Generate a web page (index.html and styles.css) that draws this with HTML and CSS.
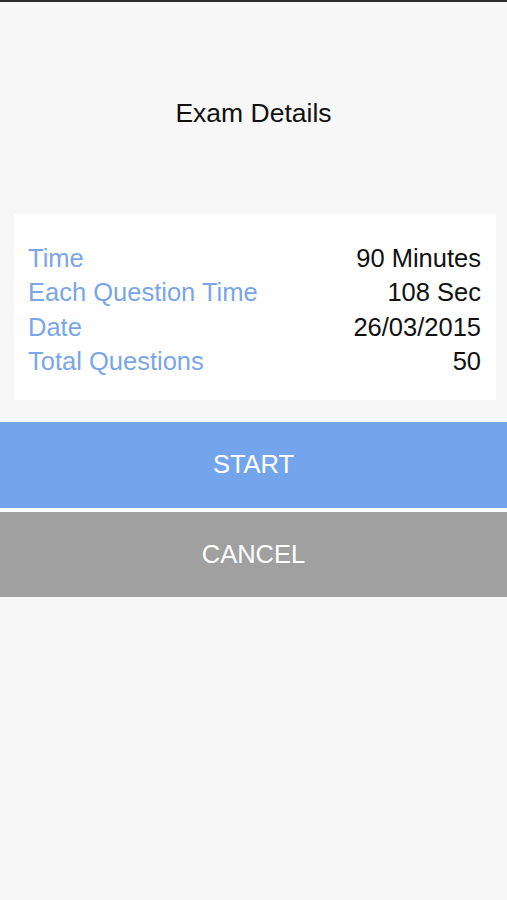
FILE: index.html
```html
<!DOCTYPE html>
<html lang="en">
<head>
  <meta charset="UTF-8" />
  <meta name="viewport" content="width=device-width, initial-scale=1.0" />
  <title>Exam Details</title>
  <link rel="stylesheet" href="styles.css">
</head>
<body>
  <div class="screen">
    <h2 class="title">Exam Details</h2>

    <div class="details">
      <div class="row"><span class="label">Time</span><span class="value">90 Minutes</span></div>
      <div class="row"><span class="label">Each Question Time</span><span class="value">108 Sec</span></div>
      <div class="row"><span class="label">Date</span><span class="value">26/03/2015</span></div>
      <div class="row"><span class="label">Total Questions</span><span class="value">50</span></div>
    </div>

    <div class="actions">
      <button class="btn btn-start">START</button>
      <button class="btn btn-cancel">CANCEL</button>
    </div>
  </div>
</body>
</html>
```

FILE: styles.css
```css
html, body {
  margin: 0;
  padding: 0;
}
body {
  font-family: "Liberation Sans", Arial, sans-serif;
  background-color: #f7f7f7;
  height: 900px;
  border-top: 2px solid #2e2e2e;
  box-sizing: border-box;
}
.title {
  margin: 0;
  padding-top: 96px;
  font-size: 26.5px;
  line-height: 30px;
  font-weight: normal;
  text-align: center;
  color: #111;
}
.details {
  margin: 86px 11px 0 14px;
  background-color: #fff;
  padding: 27px 15px 21px 14px;
}
.row {
  display: flex;
  justify-content: space-between;
  font-size: 25.5px;
  line-height: 34.4px;
}
.label {
  color: #79a6e8;
}
.value {
  color: #111;
}
.actions {
  margin-top: 22px;
  display: flex;
  flex-direction: column;
  gap: 4px;
  background-color: #fff;
}
.btn {
  display: block;
  width: 100%;
  height: 86px;
  border: none;
  color: #fff;
  font-family: inherit;
  font-size: 25.5px;
  padding: 0;
}
.btn-start {
  background-color: #74a5ec;
}
.btn-cancel {
  height: 85px;
  background-color: #a0a0a0;
}
```
